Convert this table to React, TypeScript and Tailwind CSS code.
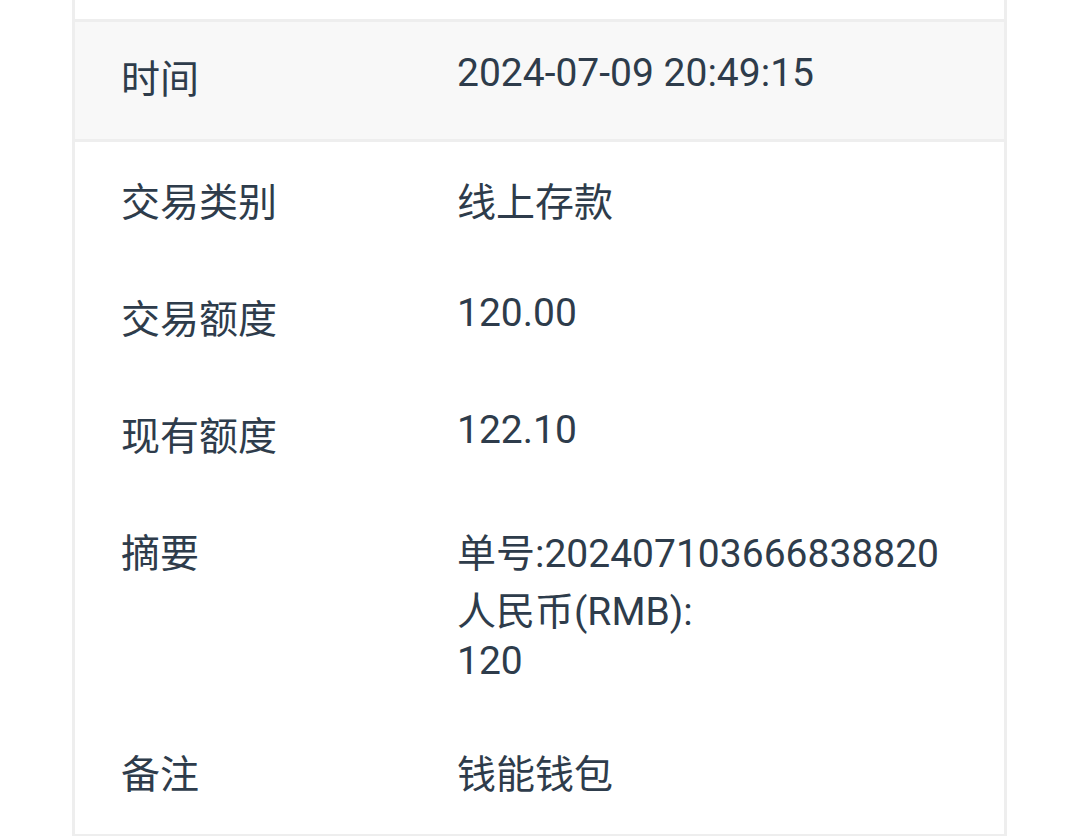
const rows: { label: string; value: string[]; num?: boolean; tight?: boolean }[] = [
  { label: "交易类别", value: ["线上存款"] },
  { label: "交易额度", value: ["120.00"], num: true },
  { label: "现有额度", value: ["122.10"], num: true },
  { label: "摘要", value: ["单号:202407103666838820", "人民币(RMB):", "120"], tight: true },
  { label: "备注", value: ["钱能钱包"] },
];

function Row({
  label,
  value,
  shaded,
  num,
  tight,
}: {
  label: string;
  value: string[];
  shaded?: boolean;
  num?: boolean;
  tight?: boolean;
}) {
  return (
    <div
      className={
        "grid grid-cols-[336px_1fr] pl-[46px] pt-[34px] " +
        (tight ? "pb-[31px] " : "pb-[34px] ") +
        (shaded ? "bg-[#f8f8f8] border-y-[3px] border-[#eeeeee]" : "")
      }
    >
      <div className="leading-[49px]">{label}</div>
      <div className={num ? "leading-[35px]" : "leading-[49px]"}>
        {value.map((v, i) => (
          <div key={i} className={i === 1 ? "mt-[9px]" : ""}>
            {v}
          </div>
        ))}
      </div>
    </div>
  );
}

export default function App() {
  return (
    <div
      className="h-[836px] w-full overflow-hidden bg-white text-[39px] text-[#2e3c4b]"
      style={{ fontFamily: "Roboto, 'Noto Sans CJK SC', sans-serif" }}
    >
      <div className="ml-[72px] w-[935px] border-x-[3px] border-[#eeeeee]">
        <div className="h-[19px]" />
        <Row label="时间" value={["2024-07-09 20:49:15"]} shaded num />
        <div className="pt-[3px]">
          {rows.map((r) => (
            <Row key={r.label} label={r.label} value={r.value} num={r.num} tight={r.tight} />
          ))}
        </div>
        <div className="h-[3px] bg-[#eeeeee]" />
        <div className="h-[40px] bg-[#fafafa]" />
      </div>
    </div>
  );
}
